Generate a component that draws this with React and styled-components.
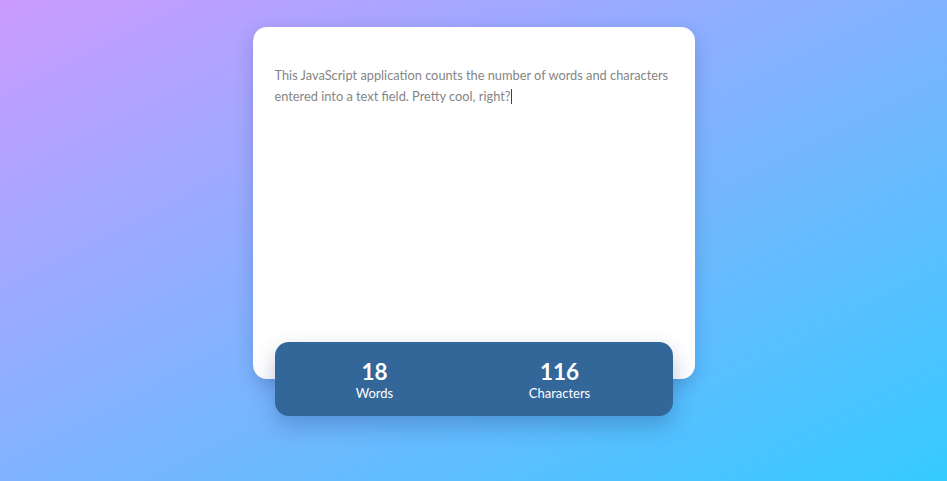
import React from "react";
import styled, { createGlobalStyle } from "styled-components";

const Global = createGlobalStyle`
  html, body { margin: 0; padding: 0; }
  body {
    width: 947px;
    height: 481px;
    overflow: hidden;
    font-family: "Lato", "Noto Sans", sans-serif;
    background: linear-gradient(to bottom right, #cb9bff 0%, #35cbff 100%);
  }
`;

const Page = styled.div`
  display: flex;
  flex-direction: column;
  align-items: center;
  padding-top: 27px;
`;

const Card = styled.div`
  box-sizing: border-box;
  width: 442px;
  height: 352px;
  background: #ffffff;
  border-radius: 14px;
  padding: 38px 22px 22px;
  box-shadow: 0 6px 18px rgba(40, 60, 120, 0.25);
`;

const Field = styled.div`
  font-size: 12.8px;
  line-height: 21px;
  color: #858585;
`;

const Caret = styled.span`
  display: inline-block;
  width: 1px;
  height: 15px;
  background: #444;
  vertical-align: -3px;
`;

const Stats = styled.div`
  box-sizing: border-box;
  width: 398px;
  height: 74px;
  margin-top: -37px;
  padding-left: 50px;
  padding-top: 2px;
  background: #336699;
  border-radius: 14px;
  display: flex;
  justify-content: flex-start;
  align-items: center;
  gap: 85px;
  box-shadow: 0 10px 22px rgba(30, 60, 120, 0.3);
  color: #ffffff;
`;

const Stat = styled.div`
  width: 100px;
  display: flex;
  flex-direction: column;
  align-items: center;
`;

const Value = styled.span`
  font-size: 22.5px;
  font-weight: 700;
  line-height: 27px;
`;

const Label = styled.span`
  font-size: 13px;
  line-height: 17px;
`;

export default function App() {
  return (
    <>
      <Global />
      <Page>
        <Card>
          <Field>
            This JavaScript application counts the number of words and characters entered into a text field. Pretty cool, right?<Caret />
          </Field>
        </Card>
        <Stats>
          <Stat>
            <Value>18</Value>
            <Label>Words</Label>
          </Stat>
          <Stat>
            <Value>116</Value>
            <Label>Characters</Label>
          </Stat>
        </Stats>
      </Page>
    </>
  );
}
